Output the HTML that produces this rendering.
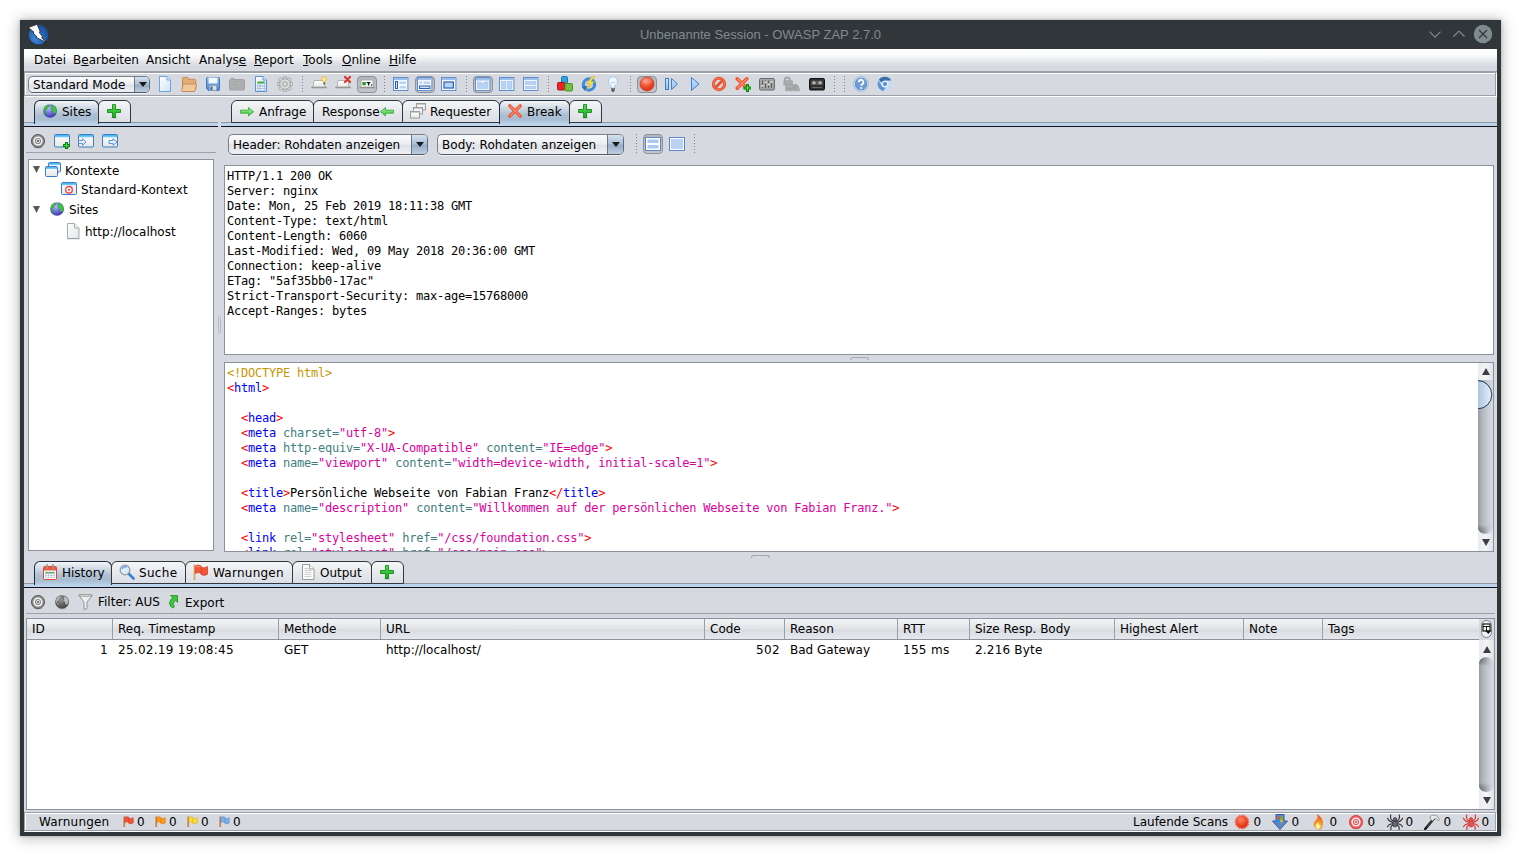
<!DOCTYPE html>
<html lang="de">
<head>
<meta charset="utf-8">
<title>Unbenannte Session - OWASP ZAP 2.7.0</title>
<style>
*{box-sizing:border-box;margin:0;padding:0}
html,body{width:1521px;height:856px;overflow:hidden;background:#fff}
body{font-family:"DejaVu Sans","Liberation Sans",sans-serif;font-size:12px;color:#000;position:relative}
#root div,#root span,#root svg,#root pre{position:absolute}
#win{left:20px;top:20px;width:1481px;height:816px;background:#31363b;box-shadow:0 1px 13px 1px rgba(0,0,0,.28),0 0 3px rgba(0,0,0,.22)}
#title{left:20px;top:20px;width:1481px;height:29px;color:#7f8c8d;font-family:"Liberation Sans",sans-serif;font-size:13px;line-height:29px;text-align:center}
#app{left:24px;top:49px;width:1473px;height:783px;background:#d6d9df}
#menubar{left:24px;top:49px;width:1473px;height:23px;background:linear-gradient(#ffffff 0,#fafbfb 28%,#eceef1 48%,#dcdfe4 66%,#d6d9df 78%,#d6d9df 100%);border-bottom:1px solid #9b9fa8}
.m{top:53px;line-height:15px;white-space:pre}
u{text-decoration:underline;text-underline-offset:1px}
.t{white-space:pre;line-height:15px;margin-top:1px}
pre{font-family:"DejaVu Sans Mono","Liberation Mono",monospace;font-size:12px;line-height:15px;letter-spacing:-0.224px;white-space:pre}
.etch{border:1px solid #9b9fa8}
.etchh{border:1px solid #fff}
.tab{height:23px;border:1px solid #33363d;border-radius:6px 6px 0 0;background:linear-gradient(#f5f6f8,#e6e8ec 50%,#dcdfe5)}
.tab.sel{border-bottom:none;border-color:#1d2c40;background:linear-gradient(#f3f6f9 0,#d5dee8 25%,#adbfd2 60%,#a9bed3 80%,#bad0e4 100%);height:24px}
.tline1{height:1px;background:#8f96a3}
.tline2{height:3px;background:#bdd4ea}
.tline3{height:1px;background:#10131f}
.pane{background:#fff;border:1px solid #8d919b}
.combo{border:1px solid #7b7f88;border-bottom-color:#52565f;border-right-color:#5a6f88;border-radius:5px;background:linear-gradient(#fafbfc,#eceef1 45%,#dfe2e7 55%,#eef0f3);box-shadow:0 1px 0 rgba(255,255,255,.7)}
.cbtn{border-left:1px solid #6b7686;border-radius:0 4px 4px 0;background:linear-gradient(#d6e1ee,#aec1d6 45%,#98aec7 55%,#bccde0)}
.arr{width:0;height:0;border-left:4px solid transparent;border-right:4px solid transparent;border-top:5.5px solid #1a1a1a;margin-left:-.5px}
.hline{height:1px;background:#9b9fa8}
.th{top:619px;height:20px;background:linear-gradient(#f4f5f7,#e3e5e9 45%,#d9dce1 55%,#e6e8ec);border-right:1px solid #9b9fa8}
.tht{top:622px;line-height:15px;white-space:pre}
.sbtrack{background:linear-gradient(90deg,#989ba2 0,#b4b7be 30%,#cbced4 70%,#d6d9df 100%)}
.sbbtn{background:linear-gradient(90deg,#e9ebee,#f3f4f6 50%,#e0e2e6)}
.up{width:0;height:0;border-left:4px solid transparent;border-right:4px solid transparent;border-bottom:7px solid #3b3e44}
.dn{width:0;height:0;border-left:4px solid transparent;border-right:4px solid transparent;border-top:7px solid #3b3e44}
.tbsel{border:1px solid #8d9199;border-radius:4px;background:linear-gradient(#b3b6bd,#c3c6cc)}
.sep{width:1px;border-left:1px dotted #8a8e97}
.d{color:#c89600}.r{color:#f00}.b{color:#00f}.a{color:#3f7f7f}.v{color:#dc009c}
</style>
</head>
<body>
<div id="root">
<div id="win"></div>
<div id="title">Unbenannte Session - OWASP ZAP 2.7.0</div>
<div id="app"></div>
<div id="menubar"></div>
<span class="m" style="left:34px">Datei</span><span class="m" style="left:73px">B<u>e</u>arbeiten</span><span class="m" style="left:146px">Ansicht</span><span class="m" style="left:199px">Analys<u>e</u></span><span class="m" style="left:254px"><u>R</u>eport</span><span class="m" style="left:303px"><u>T</u>ools</span><span class="m" style="left:342px"><u>O</u>nline</span><span class="m" style="left:389px"><u>H</u>ilfe</span>

<!-- main toolbar -->
<div class="etchh" style="left:25px;top:73px;width:1472px;height:24px"></div>
<div class="etch" style="left:24px;top:72px;width:1472px;height:24px"></div>
<div class="combo" style="left:28px;top:76px;width:122px;height:17px"></div>
<div class="cbtn" style="left:134px;top:77px;width:15px;height:15px"></div>
<div class="arr" style="left:139.5px;top:82px"></div>
<span class="t" style="left:33px;top:77px;letter-spacing:.1px">Standard Mode</span>

<!-- left tabs -->
<div class="tline1" style="left:24px;top:122px;width:194px"></div>
<div class="tline2" style="left:24px;top:123px;width:194px"></div>
<div class="tline3" style="left:24px;top:126px;width:194px"></div>
<div class="tab sel" style="left:34px;top:100px;width:65px"></div>
<div class="tab" style="left:98px;top:100px;width:33px"></div>
<span class="t" style="left:62px;top:104px">Sites</span>

<!-- right tabs -->
<div class="tline1" style="left:221px;top:122px;width:1276px"></div>
<div class="tline2" style="left:221px;top:123px;width:1276px"></div>
<div class="tline3" style="left:221px;top:126px;width:1276px"></div>
<div class="tab" style="left:231px;top:100px;width:83px"></div>
<div class="tab" style="left:313px;top:100px;width:90px"></div>
<div class="tab" style="left:402px;top:100px;width:98px"></div>
<div class="tab sel" style="left:499px;top:100px;width:71px"></div>
<div class="tab" style="left:569px;top:100px;width:33px"></div>
<span class="t" style="left:259px;top:104px">Anfrage</span>
<span class="t" style="left:322px;top:104px">Response</span>
<span class="t" style="left:430px;top:104px">Requester</span>
<span class="t" style="left:527px;top:104px">Break</span>

<!-- left pane -->
<div class="hline" style="left:26px;top:152px;width:190px"></div>
<div class="pane" style="left:28px;top:159px;width:186px;height:392px"></div>
<span class="t" style="left:65px;top:163px;letter-spacing:.15px">Kontexte</span>
<span class="t" style="left:81px;top:182px;letter-spacing:.12px">Standard-Kontext</span>
<span class="t" style="left:69px;top:202px">Sites</span>
<span class="t" style="left:85px;top:224px">http://localhost</span>

<!-- right pane -->
<div class="combo" style="left:228px;top:134px;width:200px;height:21px"></div>
<div class="cbtn" style="left:411px;top:135px;width:16px;height:19px"></div>
<div class="arr" style="left:416px;top:142px"></div>
<span class="t" style="left:233px;top:137px">Header: Rohdaten anzeigen</span>
<div class="combo" style="left:437px;top:134px;width:187px;height:21px"></div>
<div class="cbtn" style="left:607px;top:135px;width:16px;height:19px"></div>
<div class="arr" style="left:612px;top:142px"></div>
<span class="t" style="left:442px;top:137px;letter-spacing:.05px">Body: Rohdaten anzeigen</span>

<div class="pane" style="left:224px;top:165px;width:1270px;height:190px"></div>
<pre style="left:227px;top:169px">HTTP/1.1 200 OK
Server: nginx
Date: Mon, 25 Feb 2019 18:11:38 GMT
Content-Type: text/html
Content-Length: 6060
Last-Modified: Wed, 09 May 2018 20:36:00 GMT
Connection: keep-alive
ETag: "5af35bb0-17ac"
Strict-Transport-Security: max-age=15768000
Accept-Ranges: bytes</pre>
<div class="pane" style="left:224px;top:362px;width:1270px;height:190px;overflow:hidden" id="body">
<pre style="left:2px;top:3px"><span class="d" style="position:static">&lt;!DOCTYPE html&gt;</span>
<i style="font-style:normal" class="r">&lt;</i><i style="font-style:normal" class="b">html</i><i style="font-style:normal" class="r">&gt;</i>

  <i style="font-style:normal" class="r">&lt;</i><i style="font-style:normal" class="b">head</i><i style="font-style:normal" class="r">&gt;</i>
  <i style="font-style:normal" class="r">&lt;</i><i style="font-style:normal" class="b">meta</i> <i style="font-style:normal" class="a">charset</i><i style="font-style:normal" class="a">=</i><i style="font-style:normal" class="v">"utf-8"</i><i style="font-style:normal" class="r">&gt;</i>
  <i style="font-style:normal" class="r">&lt;</i><i style="font-style:normal" class="b">meta</i> <i style="font-style:normal" class="a">http-equiv</i><i style="font-style:normal" class="a">=</i><i style="font-style:normal" class="v">"X-UA-Compatible"</i> <i style="font-style:normal" class="a">content</i><i style="font-style:normal" class="a">=</i><i style="font-style:normal" class="v">"IE=edge"</i><i style="font-style:normal" class="r">&gt;</i>
  <i style="font-style:normal" class="r">&lt;</i><i style="font-style:normal" class="b">meta</i> <i style="font-style:normal" class="a">name</i><i style="font-style:normal" class="a">=</i><i style="font-style:normal" class="v">"viewport"</i> <i style="font-style:normal" class="a">content</i><i style="font-style:normal" class="a">=</i><i style="font-style:normal" class="v">"width=device-width, initial-scale=1"</i><i style="font-style:normal" class="r">&gt;</i>

  <i style="font-style:normal" class="r">&lt;</i><i style="font-style:normal" class="b">title</i><i style="font-style:normal" class="r">&gt;</i>Persönliche Webseite von Fabian Franz<i style="font-style:normal" class="r">&lt;/</i><i style="font-style:normal" class="b">title</i><i style="font-style:normal" class="r">&gt;</i>
  <i style="font-style:normal" class="r">&lt;</i><i style="font-style:normal" class="b">meta</i> <i style="font-style:normal" class="a">name</i><i style="font-style:normal" class="a">=</i><i style="font-style:normal" class="v">"description"</i> <i style="font-style:normal" class="a">content</i><i style="font-style:normal" class="a">=</i><i style="font-style:normal" class="v">"Willkommen auf der persönlichen Webseite von Fabian Franz."</i><i style="font-style:normal" class="r">&gt;</i>

  <i style="font-style:normal" class="r">&lt;</i><i style="font-style:normal" class="b">link</i> <i style="font-style:normal" class="a">rel</i><i style="font-style:normal" class="a">=</i><i style="font-style:normal" class="v">"stylesheet"</i> <i style="font-style:normal" class="a">href</i><i style="font-style:normal" class="a">=</i><i style="font-style:normal" class="v">"/css/foundation.css"</i><i style="font-style:normal" class="r">&gt;</i>
  <i style="font-style:normal" class="r">&lt;</i><i style="font-style:normal" class="b">link</i> <i style="font-style:normal" class="a">rel</i><i style="font-style:normal" class="a">=</i><i style="font-style:normal" class="v">"stylesheet"</i> <i style="font-style:normal" class="a">href</i><i style="font-style:normal" class="a">=</i><i style="font-style:normal" class="v">"/css/main.css"</i><i style="font-style:normal" class="r">&gt;</i></pre>
<div class="sbbtn" style="left:1253px;top:0;width:15px;height:188px"></div>
<div class="sbtrack" style="left:1253px;top:17px;width:15px;height:154px;border-radius:0 0 9px 9px/0 0 7px 7px"></div>
<div style="left:1253px;top:162px;width:15px;height:9px;border-radius:0 0 9px 9px/0 0 7px 7px;-webkit-mask-image:linear-gradient(to top,#000 20%,transparent);mask-image:linear-gradient(to top,#000 20%,transparent);background:linear-gradient(115deg,rgba(45,47,53,.75) 0,rgba(60,62,68,.45) 35%,rgba(120,122,128,0) 75%)"></div>
<div class="up" style="left:1257px;top:5px"></div>
<div class="dn" style="left:1257px;top:176px"></div>
</div>

<div style="left:850px;top:357px;width:19px;height:3px;border:1px solid #a4a8b1;border-bottom:none;border-radius:3px 3px 0 0"></div>
<div style="left:751px;top:555px;width:19px;height:3px;border:1px solid #a4a8b1;border-bottom:none;border-radius:3px 3px 0 0"></div>
<div style="left:218px;top:316px;width:3px;height:18px;border:1px solid #b9bcc4;border-radius:1.5px"></div>
<!-- bottom tabs -->
<div class="tline1" style="left:24px;top:583px;width:1473px"></div>
<div class="tline2" style="left:24px;top:584px;width:1473px"></div>
<div class="tline3" style="left:24px;top:587px;width:1473px"></div>
<div class="tab sel" style="left:34px;top:561px;width:78px"></div>
<div class="tab" style="left:111px;top:561px;width:75px"></div>
<div class="tab" style="left:185px;top:561px;width:108px"></div>
<div class="tab" style="left:292px;top:561px;width:80px"></div>
<div class="tab" style="left:371px;top:561px;width:33px"></div>
<span class="t" style="left:62px;top:565px">History</span>
<span class="t" style="left:139px;top:565px;letter-spacing:.3px">Suche</span>
<span class="t" style="left:213px;top:565px;letter-spacing:.25px">Warnungen</span>
<span class="t" style="left:320px;top:565px">Output</span>

<span class="t" style="left:98px;top:594px">Filter: AUS</span>
<span class="t" style="left:185px;top:595px">Export</span>
<div class="hline" style="left:26px;top:613px;width:1469px"></div>

<!-- table -->
<div class="pane" style="left:26px;top:618px;width:1469px;height:192px"></div>
<div class="th" style="left:27px;width:86px"></div>
<div class="th" style="left:113px;width:166px"></div>
<div class="th" style="left:279px;width:102px"></div>
<div class="th" style="left:381px;width:324px"></div>
<div class="th" style="left:705px;width:80px"></div>
<div class="th" style="left:785px;width:113px"></div>
<div class="th" style="left:898px;width:72px"></div>
<div class="th" style="left:970px;width:145px"></div>
<div class="th" style="left:1115px;width:129px"></div>
<div class="th" style="left:1244px;width:79px"></div>
<div class="th" style="left:1323px;width:156px;border-right:none"></div>
<div class="hline" style="left:27px;top:639px;width:1452px;background:#8d919b"></div>
<span class="tht" style="left:32px">ID</span>
<span class="tht" style="left:118px">Req. Timestamp</span>
<span class="tht" style="left:284px">Methode</span>
<span class="tht" style="left:386px">URL</span>
<span class="tht" style="left:710px">Code</span>
<span class="tht" style="left:790px">Reason</span>
<span class="tht" style="left:903px">RTT</span>
<span class="tht" style="left:975px">Size Resp. Body</span>
<span class="tht" style="left:1120px">Highest Alert</span>
<span class="tht" style="left:1249px">Note</span>
<span class="tht" style="left:1328px">Tags</span>
<span class="t" style="left:100px;top:642px">1</span>
<span class="t" style="left:118px;top:642px;letter-spacing:.28px">25.02.19 19:08:45</span>
<span class="t" style="left:284px;top:642px">GET</span>
<span class="t" style="left:386px;top:642px">http://localhost/</span>
<span class="t" style="left:756px;top:642px;letter-spacing:.35px">502</span>
<span class="t" style="left:790px;top:642px">Bad Gateway</span>
<span class="t" style="left:903px;top:642px;letter-spacing:.3px">155 ms</span>
<span class="t" style="left:975px;top:642px;letter-spacing:.2px">2.216 Byte</span>
<div style="left:1479px;top:619px;width:15px;height:21px;background:#d6d9df"></div>
<div class="sbbtn" style="left:1479px;top:640px;width:15px;height:169px"></div>
<div class="sbtrack" style="left:1479px;top:657px;width:15px;height:135px;border-radius:9px/7px"></div>
<div style="left:1479px;top:657px;width:15px;height:9px;border-radius:9px 9px 0 0/7px 7px 0 0;-webkit-mask-image:linear-gradient(to bottom,#000 20%,transparent);mask-image:linear-gradient(to bottom,#000 20%,transparent);background:linear-gradient(65deg,rgba(45,47,53,.75) 0,rgba(60,62,68,.45) 35%,rgba(120,122,128,0) 75%)"></div>
<div style="left:1479px;top:783px;width:15px;height:9px;border-radius:0 0 9px 9px/0 0 7px 7px;-webkit-mask-image:linear-gradient(to top,#000 20%,transparent);mask-image:linear-gradient(to top,#000 20%,transparent);background:linear-gradient(115deg,rgba(45,47,53,.75) 0,rgba(60,62,68,.45) 35%,rgba(120,122,128,0) 75%)"></div>
<div class="up" style="left:1482.5px;top:645.5px"></div>
<div class="dn" style="left:1482.5px;top:797px"></div>

<!-- status bar -->
<div class="etchh" style="left:25px;top:813px;width:1472px;height:19px"></div>
<div class="etch" style="left:24px;top:812px;width:1472px;height:19px"></div>
<span class="t" style="left:39px;top:814px;letter-spacing:.2px">Warnungen</span>
<span class="t" style="left:137px;top:814px">0</span>
<span class="t" style="left:169px;top:814px">0</span>
<span class="t" style="left:201px;top:814px">0</span>
<span class="t" style="left:233px;top:814px">0</span>
<span class="t" style="left:1133px;top:814px">Laufende Scans</span>
<span class="t" style="left:1253.5px;top:814px">0</span>
<span class="t" style="left:1291.5px;top:814px">0</span>
<span class="t" style="left:1329.5px;top:814px">0</span>
<span class="t" style="left:1367.5px;top:814px">0</span>
<span class="t" style="left:1405.5px;top:814px">0</span>
<span class="t" style="left:1443.5px;top:814px">0</span>
<span class="t" style="left:1481.5px;top:814px">0</span>
<svg width="0" height="0" style="left:0;top:0"><defs>
<linearGradient id="gDoc" x1="0" y1="0" x2="1" y2="1"><stop offset="0" stop-color="#fff"/><stop offset="1" stop-color="#cfe2f8"/></linearGradient>
<linearGradient id="gGDoc" x1="0" y1="0" x2="1" y2="1"><stop offset="0" stop-color="#fff"/><stop offset="1" stop-color="#dfe6e6"/></linearGradient>
<linearGradient id="gFold" x1="0" y1="0" x2="0" y2="1"><stop offset="0" stop-color="#f3cfa5"/><stop offset="1" stop-color="#e2a56b"/></linearGradient>
<linearGradient id="gBlue" x1="0" y1="0" x2="0" y2="1"><stop offset="0" stop-color="#8cbcf2"/><stop offset="1" stop-color="#4a88d6"/></linearGradient>
<linearGradient id="gWin" x1="0" y1="0" x2="0" y2="1"><stop offset="0" stop-color="#fff"/><stop offset="1" stop-color="#e6e6e6"/></linearGradient>
<linearGradient id="gTitle" x1="0" y1="0" x2="0" y2="1"><stop offset="0" stop-color="#3fb4ee"/><stop offset="1" stop-color="#7fd0f6"/></linearGradient>
<radialGradient id="gRed" cx=".4" cy=".3" r=".8"><stop offset="0" stop-color="#ff8a6a"/><stop offset=".6" stop-color="#ee4422"/><stop offset="1" stop-color="#c62b10"/></radialGradient>
<radialGradient id="gGlobe" cx=".4" cy=".3" r=".8"><stop offset="0" stop-color="#b9b7ff"/><stop offset=".55" stop-color="#6a62e0"/><stop offset="1" stop-color="#2c2a8c"/></radialGradient>
<radialGradient id="gGGlobe" cx=".4" cy=".3" r=".8"><stop offset="0" stop-color="#9a9a9a"/><stop offset=".6" stop-color="#5c5c5c"/><stop offset="1" stop-color="#3a3a3a"/></radialGradient>
<linearGradient id="gGreen" x1="0" y1="0" x2="0" y2="1"><stop offset="0" stop-color="#5fe05a"/><stop offset="1" stop-color="#13a818"/></linearGradient>
<linearGradient id="gGrey" x1="0" y1="0" x2="0" y2="1"><stop offset="0" stop-color="#c9c9c9"/><stop offset="1" stop-color="#8f8f8f"/></linearGradient>
<linearGradient id="gLB" x1="0" y1="0" x2="0" y2="1"><stop offset="0" stop-color="#cfe4fb"/><stop offset="1" stop-color="#8fbdf0"/></linearGradient>
<linearGradient id="gFlame" x1="0" y1="0" x2="0" y2="1"><stop offset="0" stop-color="#f0501c"/><stop offset=".6" stop-color="#fb9a1e"/><stop offset="1" stop-color="#ffe15a"/></linearGradient>
<linearGradient id="gThumb" x1="0" y1="0" x2="1" y2="0"><stop offset="0" stop-color="#a9c3dd"/><stop offset=".6" stop-color="#cfe0f0"/><stop offset="1" stop-color="#e8f2fa"/></linearGradient>
<radialGradient id="gZap" cx=".35" cy=".7" r=".8"><stop offset="0" stop-color="#3f86dc"/><stop offset="1" stop-color="#124a96"/></radialGradient>
<linearGradient id="gArr" x1="0" y1="0" x2="0" y2="1"><stop offset="0" stop-color="#a8eda2"/><stop offset="1" stop-color="#3ecb3a"/></linearGradient>
</defs></svg>
<svg style="left:157px;top:76px" width="16" height="16" viewBox="0 0 16 16" ><path d="M2.500 .5h7.500l3.500 3.500v11.500h-11z" fill="url(#gDoc)" stroke="#6ea3dc"/><path d="M10 .5v3.500h3.500" fill="#eef5fd" stroke="#6ea3dc"/></svg>
<svg style="left:181px;top:76px" width="16" height="16" viewBox="0 0 16 16" ><path d="M1.500 13.500v-11q0-1.200 1.200-1.200h3.300q.8 0 1.200.8l.6 1.200h5.700q1.200 0 1.200 1.200v9z" fill="#e4ad7a" stroke="#c98a52"/><path d="M.6 14.600l1.500-5.800q.2-.8 1-.8h11.700q.9 0 .7.800l-1.500 5.800q-.2.900-1 .9h-11.600q-1 0-.8-.9z" fill="#f1c89b" stroke="#c98a52"/></svg>
<svg style="left:205px;top:76px" width="16" height="16" viewBox="0 0 16 16" ><path d="M1.500 2.500q0-1 1-1h11q1 0 1 1v11q0 1-1 1h-10l-2-2z" fill="url(#gBlue)" stroke="#3d76c6"/><rect x="3.500" y="1.500" width="9" height="6" fill="#f4f8fd" stroke="#9fc2ea" stroke-width=".6"/><rect x="4.500" y="9.500" width="7" height="5" fill="#dcdcdc" stroke="#9a9a9a" stroke-width=".6"/><rect x="5.500" y="10.500" width="2" height="3.500" fill="#2f66b4"/></svg>
<svg style="left:229px;top:76px" width="16" height="16" viewBox="0 0 16 16" ><g opacity=".55"><rect x=".5" y="3.500" width="15" height="10.500" rx="1" fill="#8c8c8c" stroke="#757575"/><rect x="2" y="1.800" width="3" height="2" fill="#808080"/><circle cx="9.500" cy="8.800" r="3.300" fill="#9a9a9a" stroke="#7a7a7a"/><circle cx="9.500" cy="8.800" r="1.300" fill="#858585"/></g></svg>
<svg style="left:253px;top:76px" width="16" height="16" viewBox="0 0 16 16" ><path d="M2.500 .5h7.500l3.500 3.500v11.500h-11z" fill="url(#gDoc)" stroke="#5b93d6"/><path d="M10 .5v3.500h3.500" fill="#eef5fd" stroke="#5b93d6"/><rect x="4.300" y="5.500" width="7.500" height="2" fill="#3fae3a"/><g fill="#fff" stroke="#8fb2dc" stroke-width=".6"><rect x="4.300" y="8" width="7.500" height="1.800"/><rect x="4.300" y="10.300" width="7.500" height="1.800"/><rect x="4.300" y="12.600" width="7.500" height="1.600"/></g><path d="M7 8v6.200" stroke="#8fb2dc" stroke-width=".6"/></svg>
<svg style="left:277px;top:76px" width="16" height="16" viewBox="0 0 16 16" ><g transform="translate(8 8)"><g fill="#d6d6d6" stroke="#979797" stroke-width=".7"><rect x="-1.700" y="-7.800" width="3.400" height="4" rx=".8" transform="rotate(0)"/><rect x="-1.700" y="-7.800" width="3.400" height="4" rx=".8" transform="rotate(45)"/><rect x="-1.700" y="-7.800" width="3.400" height="4" rx=".8" transform="rotate(90)"/><rect x="-1.700" y="-7.800" width="3.400" height="4" rx=".8" transform="rotate(135)"/><rect x="-1.700" y="-7.800" width="3.400" height="4" rx=".8" transform="rotate(180)"/><rect x="-1.700" y="-7.800" width="3.400" height="4" rx=".8" transform="rotate(225)"/><rect x="-1.700" y="-7.800" width="3.400" height="4" rx=".8" transform="rotate(270)"/><rect x="-1.700" y="-7.800" width="3.400" height="4" rx=".8" transform="rotate(315)"/></g><circle r="5.300" fill="#dcdcdc" stroke="#979797" stroke-width=".8"/><circle r="2.400" fill="#d6d9df" stroke="#979797" stroke-width=".8"/></g></svg>
<svg style="left:302px;top:76px" width="1" height="18" viewBox="0 0 1 18"><rect x="0" y="0" width="1" height="1" fill="#7f838c"/><rect x="0" y="3" width="1" height="1" fill="#7f838c"/><rect x="0" y="6" width="1" height="1" fill="#7f838c"/><rect x="0" y="9" width="1" height="1" fill="#7f838c"/><rect x="0" y="12" width="1" height="1" fill="#7f838c"/><rect x="0" y="15" width="1" height="1" fill="#7f838c"/></svg>
<svg style="left:384px;top:76px" width="1" height="18" viewBox="0 0 1 18"><rect x="0" y="0" width="1" height="1" fill="#7f838c"/><rect x="0" y="3" width="1" height="1" fill="#7f838c"/><rect x="0" y="6" width="1" height="1" fill="#7f838c"/><rect x="0" y="9" width="1" height="1" fill="#7f838c"/><rect x="0" y="12" width="1" height="1" fill="#7f838c"/><rect x="0" y="15" width="1" height="1" fill="#7f838c"/></svg>
<svg style="left:466px;top:76px" width="1" height="18" viewBox="0 0 1 18"><rect x="0" y="0" width="1" height="1" fill="#7f838c"/><rect x="0" y="3" width="1" height="1" fill="#7f838c"/><rect x="0" y="6" width="1" height="1" fill="#7f838c"/><rect x="0" y="9" width="1" height="1" fill="#7f838c"/><rect x="0" y="12" width="1" height="1" fill="#7f838c"/><rect x="0" y="15" width="1" height="1" fill="#7f838c"/></svg>
<svg style="left:548px;top:76px" width="1" height="18" viewBox="0 0 1 18"><rect x="0" y="0" width="1" height="1" fill="#7f838c"/><rect x="0" y="3" width="1" height="1" fill="#7f838c"/><rect x="0" y="6" width="1" height="1" fill="#7f838c"/><rect x="0" y="9" width="1" height="1" fill="#7f838c"/><rect x="0" y="12" width="1" height="1" fill="#7f838c"/><rect x="0" y="15" width="1" height="1" fill="#7f838c"/></svg>
<svg style="left:630px;top:76px" width="1" height="18" viewBox="0 0 1 18"><rect x="0" y="0" width="1" height="1" fill="#7f838c"/><rect x="0" y="3" width="1" height="1" fill="#7f838c"/><rect x="0" y="6" width="1" height="1" fill="#7f838c"/><rect x="0" y="9" width="1" height="1" fill="#7f838c"/><rect x="0" y="12" width="1" height="1" fill="#7f838c"/><rect x="0" y="15" width="1" height="1" fill="#7f838c"/></svg>
<svg style="left:834px;top:76px" width="1" height="18" viewBox="0 0 1 18"><rect x="0" y="0" width="1" height="1" fill="#7f838c"/><rect x="0" y="3" width="1" height="1" fill="#7f838c"/><rect x="0" y="6" width="1" height="1" fill="#7f838c"/><rect x="0" y="9" width="1" height="1" fill="#7f838c"/><rect x="0" y="12" width="1" height="1" fill="#7f838c"/><rect x="0" y="15" width="1" height="1" fill="#7f838c"/></svg>
<svg style="left:844px;top:76px" width="1" height="18" viewBox="0 0 1 18"><rect x="0" y="0" width="1" height="1" fill="#7f838c"/><rect x="0" y="3" width="1" height="1" fill="#7f838c"/><rect x="0" y="6" width="1" height="1" fill="#7f838c"/><rect x="0" y="9" width="1" height="1" fill="#7f838c"/><rect x="0" y="12" width="1" height="1" fill="#7f838c"/><rect x="0" y="15" width="1" height="1" fill="#7f838c"/></svg>
<svg style="left:311px;top:76px" width="16" height="16" viewBox="0 0 16 16" ><path d="M.3 11.600h15.400" stroke="#8f8f8f" stroke-width="1.300"/><path d="M.8 11q1.700 0 1.700-1.700v-3.300q0-1.500 1.500-1.500h8q1.500 0 1.500 1.500v3.300q0 1.700 1.700 1.700z" fill="url(#gWin)" stroke="#a3a3a3" stroke-width=".8"/><path d="M13.200 0.300a2.600 2.600 0 0 1 1.300 4.800l-.3 1.500h-2l-.3-1.500a2.600 2.600 0 0 1 1.300-4.800z" fill="#ffe48a" stroke="#d9a93a" stroke-width=".7"/><rect x="12.300" y="6.600" width="1.800" height="1.700" fill="#555"/></svg>
<svg style="left:335px;top:76px" width="16" height="16" viewBox="0 0 16 16" ><path d="M.3 11.600h15.400" stroke="#8f8f8f" stroke-width="1.300"/><path d="M.8 11q1.700 0 1.700-1.700v-3.300q0-1.500 1.500-1.500h8q1.500 0 1.500 1.500v3.300q0 1.700 1.700 1.700z" fill="url(#gWin)" stroke="#a3a3a3" stroke-width=".8"/><path d="M10 1l5 5M15 1l-5 5" stroke="#e0332c" stroke-width="2.200" stroke-linecap="round"/></svg>
<div class="tbsel" style="left:357px;top:76px;width:20px;height:17px"></div>
<svg style="left:359px;top:76px" width="16" height="16" viewBox="0 0 16 16" ><path d="M.3 11.600h15.400" stroke="#8a8a8a" stroke-width="1.300"/><path d="M.8 11q1.200 0 1.200-1.500v-4q0-1.500 1.500-1.500h9q1.500 0 1.500 1.500v4q0 1.500 1.200 1.500z" fill="#fdfdfd" stroke="#a0a0a0" stroke-width=".8"/><rect x="3.800" y="6.300" width="2.600" height="2.600" fill="#20b020" stroke="#0d7a0d" stroke-width=".6"/><path d="M7.800 6.600h3.600M9.600 6.600v3" stroke="#111" stroke-width="1.300"/><rect x="12" y="8.400" width="1.200" height="1.200" fill="#111"/></svg>
<svg style="left:393px;top:76px" width="16" height="16" viewBox="0 0 16 16" ><rect x=".5" y="1.500" width="14.400" height="13" fill="#f4f8fe" stroke="#648fce"/><rect x="1" y="2" width="13.400" height="2" fill="#9dbdea"/><rect x="2.500" y="5.500" width="2" height="7" fill="#cfe0f6" stroke="#2f62b0"/><rect x="6.500" y="5.500" width="6.400" height="2.500" fill="#b9d3f3"/><rect x="6.500" y="10" width="6.400" height="2.500" fill="#b9d3f3"/></svg>
<div class="tbsel" style="left:415px;top:76px;width:20px;height:17px"></div>
<svg style="left:417px;top:76px" width="16" height="16" viewBox="0 0 16 16" ><rect x=".5" y="1.500" width="14.400" height="13" fill="#f4f8fe" stroke="#648fce"/><rect x="1" y="2" width="13.400" height="2" fill="#9dbdea"/><rect x="2.500" y="5.500" width="2.500" height="2.500" fill="#b9d3f3"/><rect x="6.500" y="5.500" width="6.400" height="2.500" fill="#b9d3f3"/><rect x="2.500" y="10" width="10.400" height="2.500" fill="#cfe0f6" stroke="#2f62b0"/></svg>
<svg style="left:441px;top:76px" width="16" height="16" viewBox="0 0 16 16" ><rect x=".5" y="1.500" width="14.400" height="13" fill="#f4f8fe" stroke="#648fce"/><rect x="1" y="2" width="13.400" height="2" fill="#9dbdea"/><rect x="3" y="6" width="9.400" height="6" fill="#b9d3f3" stroke="#2f62b0" stroke-width="1.200"/></svg>
<div class="tbsel" style="left:473px;top:76px;width:20px;height:17px"></div>
<svg style="left:475px;top:76px" width="16" height="16" viewBox="0 0 16 16" ><rect x=".5" y="1.500" width="14.400" height="13" fill="#f4f8fe" stroke="#648fce"/><rect x="1" y="2" width="13.400" height="2.500" fill="#9dbdea"/><path d="M2.500 6h3.500v1h3.400v-1h3.500v6.500h-10.400z" fill="#b9d3f3" stroke="#9cc0ee" stroke-width=".6"/></svg>
<svg style="left:499px;top:76px" width="16" height="16" viewBox="0 0 16 16" ><rect x=".5" y="1.500" width="14.400" height="13" fill="#f4f8fe" stroke="#648fce"/><rect x="1" y="2" width="13.400" height="2" fill="#9dbdea"/><rect x="2.500" y="5.500" width="4.300" height="7.500" fill="#b9d3f3" stroke="#9cc0ee" stroke-width=".6"/><rect x="8.600" y="5.500" width="4.300" height="7.500" fill="#b9d3f3" stroke="#9cc0ee" stroke-width=".6"/></svg>
<svg style="left:523px;top:76px" width="16" height="16" viewBox="0 0 16 16" ><rect x=".5" y="1.500" width="14.400" height="13" fill="#f4f8fe" stroke="#648fce"/><rect x="1" y="2" width="13.400" height="2" fill="#9dbdea"/><rect x="2.500" y="5.500" width="10.400" height="3" fill="#b9d3f3" stroke="#9cc0ee" stroke-width=".6"/><rect x="2.500" y="10.300" width="10.400" height="2.500" fill="#b9d3f3" stroke="#9cc0ee" stroke-width=".6"/></svg>
<svg style="left:557px;top:76px" width="16" height="16" viewBox="0 0 16 16" ><rect x="4.500" y=".5" width="6" height="7" rx="1.200" fill="#2da4dc" stroke="#1779b0"/><rect x=".5" y="6.500" width="7.500" height="7.500" rx="1.200" fill="#e8242a" stroke="#b01218"/><rect x="8" y="7.500" width="7.500" height="7.500" rx="1.200" fill="#76c043" stroke="#4c9422"/></svg>
<svg style="left:581px;top:76px" width="16" height="16" viewBox="0 0 16 16" ><circle cx="8" cy="8.500" r="5.600" fill="none" stroke="#3b8ee0" stroke-width="3.200"/><path d="M0.500 10.500l3.500 4.500 2.500-5.200z" fill="#2d6fc4"/><path d="M11.500 0l-6 7.500h3l-3 7 8-9h-3.500l4-5.500z" fill="#f6e04a" stroke="#c9a820" stroke-width=".6"/></svg>
<svg style="left:605px;top:76px" width="16" height="16" viewBox="0 0 16 16" ><path d="M8 .6a4.700 4.700 0 0 1 2.600 8.600q-.6.500-.6 1.300v1.500h-4v-1.500q0-.8-.6-1.300a4.700 4.700 0 0 1 2.600-8.600z" fill="#eef6ff" stroke="#9cc4f0" stroke-width=".9"/><path d="M5.500 6q2.500 2 5 0" fill="none" stroke="#9cc4f0" stroke-width=".8"/><rect x="6" y="12" width="4" height="2.200" fill="#777"/><rect x="6.700" y="14.200" width="2.600" height="1.300" fill="#222"/></svg>
<div class="tbsel" style="left:637px;top:76px;width:20px;height:17px"></div>
<svg style="left:639px;top:76px" width="16" height="16" viewBox="0 0 16 16" ><circle cx="8" cy="8" r="7" fill="url(#gRed)" stroke="#c2371c" stroke-width=".6"/><ellipse cx="8" cy="5" rx="5" ry="3" fill="#fff" opacity=".18"/></svg>
<svg style="left:664px;top:76px" width="16" height="16" viewBox="0 0 16 16" ><rect x="1.500" y="2.500" width="3" height="11" fill="url(#gLB)" stroke="#3c7fd0"/><path d="M7.500 2.500l6 5.500-6 5.500z" fill="url(#gLB)" stroke="#3c7fd0"/></svg>
<svg style="left:687px;top:76px" width="16" height="16" viewBox="0 0 16 16" ><path d="M4.500 1.500l7.500 6.500-7.500 6.500z" fill="url(#gLB)" stroke="#3c7fd0"/></svg>
<svg style="left:711px;top:76px" width="16" height="16" viewBox="0 0 16 16" ><circle cx="8" cy="8" r="5.700" fill="none" stroke="#e8502c" stroke-width="3"/><path d="M4 12l8-8" stroke="#e8502c" stroke-width="2.600"/><circle cx="8" cy="8" r="5.700" fill="none" stroke="#ff9a78" stroke-width=".9" opacity=".7"/></svg>
<svg style="left:735px;top:76px" width="16" height="16" viewBox="0 0 16 16" ><path d="M2.200 2.700l9.600 9.600M11.800 2.700l-9.600 9.600" stroke="#ee4f2b" stroke-width="3.400" stroke-linecap="round"/><path d="M2.500 3l9 9M11.500 3l-9 9" stroke="#ff8f6e" stroke-width="1.200" stroke-linecap="round"/><polygon points="11.5,8.500 13.500,8.500 13.500,11 16,11 16,13 13.500,13 13.500,15.500 11.500,15.500 11.500,13 9,13 9,11 11.500,11" fill="#43dd40" stroke="#0f7f14" stroke-width="1.100" stroke-linejoin="round"/></svg>
<svg style="left:759px;top:76px" width="16" height="16" viewBox="0 0 16 16" ><rect x=".5" y="2.500" width="15" height="11.500" rx="1.200" fill="#a4a4a4" stroke="#6c6c6c"/><g stroke="#555" stroke-width=".9"><path d="M3.500 4.500v7.500M6.500 4.500v7.500M9.500 4.500v7.500M12.500 4.500v7.500"/></g><g fill="#f2f2f2"><rect x="2.700" y="9" width="1.700" height="1.700"/><rect x="5.700" y="5.500" width="1.700" height="1.700"/><rect x="8.700" y="7.500" width="1.700" height="1.700"/><rect x="11.700" y="5" width="1.700" height="1.700"/></g></svg>
<svg style="left:783px;top:76px" width="18" height="16" viewBox="0 0 18 16" ><g opacity=".62"><circle cx="4.300" cy="3.800" r="2.400" fill="none" stroke="#808080" stroke-width="1.700"/><rect x=".8" y="4.800" width="8.700" height="4.200" fill="#8e8e8e" stroke="#7a7a7a" stroke-width=".6"/><path d="M2.500 8.500h9.500q2.500-.6 3.300 2l1.700 4.200h-14.500z" fill="#8e8e8e" stroke="#7a7a7a" stroke-width=".6"/><circle cx="13" cy="10.800" r="1.700" fill="none" stroke="#777" stroke-width=".8"/><path d="M4.500 12.500h6" stroke="#7a7a7a" stroke-width=".9"/></g></svg>
<svg style="left:808.5px;top:76px" width="16" height="16" viewBox="0 0 16 16" ><rect x=".5" y="2.500" width="15" height="11.500" rx="1.200" fill="#2e2e2e" stroke="#111"/><rect x="2" y="4.500" width="12" height="4.500" rx=".8" fill="#555"/><circle cx="5" cy="6.800" r="1.500" fill="#e8e8e8"/><circle cx="11" cy="6.800" r="1.500" fill="#e8e8e8"/><circle cx="5" cy="6.800" r=".6" fill="#222"/><circle cx="11" cy="6.800" r=".6" fill="#222"/><path d="M3 11.500h10" stroke="#666" stroke-width="1.200"/></svg>
<svg style="left:853px;top:76px" width="16" height="16" viewBox="0 0 16 16" ><circle cx="8" cy="8" r="6.900" fill="#6d9bd2" stroke="#dfeaf7" stroke-width="1"/><circle cx="8" cy="8" r="7.400" fill="none" stroke="#7da7da" stroke-width=".6"/><path d="M5.800 6.200a2.300 2.300 0 1 1 3.400 2q-1.100.6-1.100 1.600" fill="none" stroke="#fff" stroke-width="1.700"/><circle cx="8.100" cy="11.900" r="1" fill="#fff"/></svg>
<svg style="left:877px;top:76px" width="16" height="16" viewBox="0 0 16 16" ><circle cx="8" cy="8" r="7.200" fill="#c6dcf3"/><path d="M8 .8a7.200 7.200 0 0 1 6.300 3.700h-6.300a3.500 3.500 0 0 0-3.300 2.300l-2.900-3a7.200 7.200 0 0 1 6.200-3z" fill="#3a6ea8"/><path d="M1.500 4.500l3.300 5.500a3.500 3.500 0 0 0 3.800 1.400l-2.200 3.600a7.200 7.200 0 0 1-4.900-10.500z" fill="#5b95d6"/><circle cx="8" cy="8" r="3.300" fill="#e6f0fb"/><rect x="6.300" y="6.300" width="3.400" height="3.400" fill="#4a84d0"/></svg>
<svg style="left:43px;top:104px" width="14" height="14" viewBox="0 0 14 14" ><circle cx="7" cy="7" r="6.800" fill="url(#gGlobe)"/><path d="M3.200 1.600q1.600-.9 3-.4l-.3 1.600-1.600.8-.5 1.800-1.700 1 .3 2 1.300.5.300 2.200q-2.700-1.300-3.300-4.600.3-3 2.500-4.900zM8.500 1l2.300.5q1.900 1.200 2.600 3.300l-.2 3.100-1.300 2.100-1.500-.6-.6-2.300-1.700-1.400.8-2z" fill="#3fc53f" stroke="#1f8a24" stroke-width=".4"/></svg>
<svg style="left:107px;top:104px" width="14" height="15" viewBox="0 0 14 15" ><path d="M5.500 .5h3v5h5v3h-5v5h-3v-5h-5v-3h5z" fill="url(#gGreen)" stroke="#158a1a" stroke-width=".9"/><ellipse cx="7" cy="13.800" rx="4" ry=".6" fill="#000" opacity=".18"/></svg>
<svg style="left:240px;top:106.5px" width="14" height="10" viewBox="0 0 14 10" ><path d="M.5 3.200h8v-2.700l5 4.200-5 4.200v-2.700h-8z" fill="url(#gArr)" stroke="#27a52c" stroke-width=".8"/></svg>
<svg style="left:380px;top:106.5px" width="14" height="10" viewBox="0 0 14 10" ><path d="M13.500 3.200h-8v-2.700l-5 4.200 5 4.200v-2.700h8z" fill="url(#gArr)" stroke="#27a52c" stroke-width=".8"/></svg>
<svg style="left:410px;top:103px" width="16" height="16" viewBox="0 0 16 16" ><g stroke="#8a8a8a" stroke-width=".8"><rect x="6.500" y=".5" width="9" height="6.500" fill="url(#gWin)"/><rect x="3.500" y="4.500" width="9" height="6.500" fill="url(#gWin)"/><rect x=".5" y="8.500" width="9" height="6.500" fill="url(#gWin)"/></g><path d="M7 1.500h8M4 5.500h8M1 9.500h8" stroke="#c9c9c9" stroke-width="1.200"/></svg>
<svg style="left:508px;top:104px" width="14" height="14" viewBox="0 0 14 14" ><path d="M1.800 1.800l10.400 10.400M12.200 1.800l-10.400 10.400" stroke="#ee4f2b" stroke-width="3.200" stroke-linecap="round"/><path d="M2 2l10 10M12 2l-10 10" stroke="#ff8f6e" stroke-width="1.100" stroke-linecap="round"/></svg>
<svg style="left:578px;top:104px" width="14" height="15" viewBox="0 0 14 15" ><path d="M5.500 .5h3v5h5v3h-5v5h-3v-5h-5v-3h5z" fill="url(#gGreen)" stroke="#158a1a" stroke-width=".9"/><ellipse cx="7" cy="13.800" rx="4" ry=".6" fill="#000" opacity=".18"/></svg>
<svg style="left:31px;top:134px" width="14" height="15" viewBox="0 0 14 15" ><ellipse cx="7" cy="13.600" rx="5" ry=".8" fill="#000" opacity=".15"/><circle cx="7" cy="7" r="6.600" fill="#8a8a8a" stroke="#4a4a4a" stroke-width=".8"/><circle cx="7" cy="7" r="4.600" fill="#f4f4f4"/><circle cx="7" cy="7" r="3.100" fill="#8a8a8a"/><circle cx="7" cy="7" r="1.900" fill="#f4f4f4"/><circle cx="7" cy="7" r="1" fill="#4a4a4a"/></svg>
<svg style="left:54px;top:134px" width="16" height="16" viewBox="0 0 16 16" ><rect x=".5" y=".5" width="15" height="12.500" rx="1" fill="url(#gWin)" stroke="#3d7cc9"/><rect x="1" y="1" width="14" height="2.300" fill="url(#gTitle)"/><polygon points="11.50,8.50 13.50,8.50 13.50,10.50 15.50,10.50 15.50,12.50 13.50,12.50 13.50,14.50 11.50,14.50 11.50,12.50 9.50,12.50 9.50,10.50 11.50,10.50" fill="#43dd40" stroke="#0f7f14" stroke-width="1.1" stroke-linejoin="round"/></svg>
<svg style="left:78px;top:134px" width="16" height="16" viewBox="0 0 16 16" ><rect x=".5" y=".5" width="15" height="12.500" rx="1" fill="url(#gWin)" stroke="#3d7cc9"/><rect x="1" y="1" width="14" height="2.300" fill="url(#gTitle)"/><path d="M.5 6.500h4v-1.800l3.500 3.300-3.500 3.300v-1.800h-4z" fill="#e6f2fd" stroke="#3d7cc9" stroke-width=".8"/></svg>
<svg style="left:102px;top:134px" width="16" height="16" viewBox="0 0 16 16" ><rect x=".5" y=".5" width="15" height="12.500" rx="1" fill="url(#gWin)" stroke="#3d7cc9"/><rect x="1" y="1" width="14" height="2.300" fill="url(#gTitle)"/><path d="M7 6.500h4v-1.800l4 3.300-4 3.300v-1.800h-4z" fill="#e6f2fd" stroke="#3d7cc9" stroke-width=".8"/></svg>
<svg style="left:33px;top:166px" width="7" height="7" viewBox="0 0 7 7" ><path d="M0 0h7l-3.500 7z" fill="#5a5a5a"/></svg>
<svg style="left:33px;top:206px" width="7" height="7" viewBox="0 0 7 7" ><path d="M0 0h7l-3.500 7z" fill="#5a5a5a"/></svg>
<svg style="left:45px;top:162px" width="16" height="15" viewBox="0 0 16 15" ><rect x="3.500" y=".5" width="12" height="9.500" rx="1" fill="url(#gWin)" stroke="#3d7cc9"/><rect x="4" y="1" width="11" height="2" fill="url(#gTitle)"/><rect x=".5" y="4.500" width="12" height="10" rx="1" fill="url(#gWin)" stroke="#3d7cc9"/><rect x="1" y="5" width="11" height="2" fill="url(#gTitle)"/></svg>
<svg style="left:61px;top:182px" width="16" height="13" viewBox="0 0 16 13" ><rect x=".5" y=".5" width="15" height="12" rx="1" fill="url(#gWin)" stroke="#3d7cc9"/><rect x="1" y="1" width="14" height="2.200" fill="url(#gTitle)"/><circle cx="8" cy="7.800" r="3.300" fill="#fff" stroke="#ee3b3b" stroke-width="1.300"/><circle cx="8" cy="7.800" r="1.100" fill="#ee3b3b"/></svg>
<svg style="left:50px;top:202px" width="14" height="14" viewBox="0 0 14 14" ><circle cx="7" cy="7" r="6.800" fill="url(#gGlobe)"/><path d="M3.200 1.600q1.600-.9 3-.4l-.3 1.600-1.600.8-.5 1.800-1.700 1 .3 2 1.300.5.300 2.200q-2.700-1.300-3.300-4.600.3-3 2.500-4.900zM8.500 1l2.300.5q1.900 1.200 2.600 3.300l-.2 3.100-1.300 2.100-1.500-.6-.6-2.300-1.700-1.400.8-2z" fill="#3fc53f" stroke="#1f8a24" stroke-width=".4"/></svg>
<svg style="left:67px;top:223px" width="13" height="17" viewBox="0 0 13 17" ><path d="M.5 .5h7l4.500 4.500v10.500h-11.500z" fill="url(#gGDoc)" stroke="#9fb0ae"/><path d="M7.500 .5v4.500h4.500" fill="#f4f7f7" stroke="#9fb0ae"/><path d="M0 16h13" stroke="#000" opacity=".15"/></svg>
<div class="tbsel" style="left:643px;top:134px;width:20px;height:20px"></div>
<svg style="left:636px;top:134px" width="1" height="21" viewBox="0 0 1 21"><rect x="0" y="0" width="1" height="1" fill="#7f838c"/><rect x="0" y="3" width="1" height="1" fill="#7f838c"/><rect x="0" y="6" width="1" height="1" fill="#7f838c"/><rect x="0" y="9" width="1" height="1" fill="#7f838c"/><rect x="0" y="12" width="1" height="1" fill="#7f838c"/><rect x="0" y="15" width="1" height="1" fill="#7f838c"/><rect x="0" y="18" width="1" height="1" fill="#7f838c"/></svg>
<svg style="left:694px;top:134px" width="1" height="21" viewBox="0 0 1 21"><rect x="0" y="0" width="1" height="1" fill="#7f838c"/><rect x="0" y="3" width="1" height="1" fill="#7f838c"/><rect x="0" y="6" width="1" height="1" fill="#7f838c"/><rect x="0" y="9" width="1" height="1" fill="#7f838c"/><rect x="0" y="12" width="1" height="1" fill="#7f838c"/><rect x="0" y="15" width="1" height="1" fill="#7f838c"/><rect x="0" y="18" width="1" height="1" fill="#7f838c"/></svg>
<svg style="left:645px;top:137px" width="16" height="14" viewBox="0 0 16 14" ><rect x=".5" y=".5" width="15" height="13" fill="#fff" stroke="#5a86c8"/><rect x="2.500" y="2.500" width="11" height="3.500" fill="#a9c9f0"/><rect x="2.500" y="8" width="11" height="3.500" fill="#a9c9f0"/></svg>
<svg style="left:669px;top:137px" width="16" height="14" viewBox="0 0 16 14" ><rect x=".5" y=".5" width="15" height="13" fill="#fff" stroke="#5a86c8"/><rect x="2.500" y="2.500" width="11" height="9" fill="#b9d3f3" stroke="#9cc0ee" stroke-width=".6"/></svg>
<svg style="left:43px;top:564px" width="14" height="16" viewBox="0 0 14 16" ><rect x=".5" y="2.500" width="13" height="13" rx="1" fill="#fff" stroke="#e0452c"/><rect x="1" y="3" width="12" height="3.500" fill="#ee5a3c"/><path d="M4 .5v4M10 .5v4" stroke="#9a9a9a" stroke-width="1.600" stroke-linecap="round"/><rect x="2.500" y="8" width="9" height="1.500" fill="#3fae3a"/><g stroke="#9fb8d8" stroke-width=".6" fill="none"><rect x="2.500" y="8" width="9" height="5.500"/><path d="M5.500 8v5.500M8.500 8v5.500M2.500 11.500h9"/></g></svg>
<svg style="left:119px;top:564px" width="16" height="16" viewBox="0 0 16 16" ><path d="M9 9l5.500 5.500" stroke="#3d7fd6" stroke-width="2.600" stroke-linecap="round"/><circle cx="6" cy="6" r="4.800" fill="#d8ebff" stroke="#9a9a9a" stroke-width="1.300"/><path d="M3.200 5a3 3 0 0 1 4.500-1.800" fill="none" stroke="#5aa0f0" stroke-width="1.300"/></svg>
<svg style="left:193px;top:564px" width="16" height="16" viewBox="0 0 16 16" ><path d="M1.500 1.200v14.300" stroke="#d9a066" stroke-width="1.700" stroke-linecap="round"/><path d="M2.400 2q3-1.800 5.800 0v1.200q3 1.600 6.300-.6v7.600q-3.300 2.200-6.300.4v-1.200q-2.800-1.600-5.800 0z" fill="#f4553a" stroke="#d2361e" stroke-width=".7" stroke-linejoin="round"/><path d="M8.200 3.200v6.200" stroke="#d2361e" stroke-width=".7"/><path d="M3 3q2.500-1.300 4.600-.2" stroke="#fff" stroke-opacity=".45" stroke-width=".9" fill="none"/></svg>
<svg style="left:302px;top:564px" width="13" height="16" viewBox="0 0 13 16" ><path d="M.5 .5h7l4.500 4.500v10.500h-11.500z" fill="#fbfbfb" stroke="#9a9a9a"/><path d="M7.500 .5v4.500h4.500" fill="#fff" stroke="#9a9a9a"/><path d="M2.500 6.500h7M2.500 8.500h7M2.500 10.500h7M2.500 12.500h7M2.500 4.500h4" stroke="#c4c4c4" stroke-width=".8"/></svg>
<svg style="left:380px;top:565px" width="14" height="15" viewBox="0 0 14 15" ><path d="M5.500 .5h3v5h5v3h-5v5h-3v-5h-5v-3h5z" fill="url(#gGreen)" stroke="#158a1a" stroke-width=".9"/><ellipse cx="7" cy="13.800" rx="4" ry=".6" fill="#000" opacity=".18"/></svg>
<svg style="left:31px;top:595px" width="14" height="15" viewBox="0 0 14 15" ><ellipse cx="7" cy="13.600" rx="5" ry=".8" fill="#000" opacity=".15"/><circle cx="7" cy="7" r="6.600" fill="#8a8a8a" stroke="#4a4a4a" stroke-width=".8"/><circle cx="7" cy="7" r="4.600" fill="#f4f4f4"/><circle cx="7" cy="7" r="3.100" fill="#8a8a8a"/><circle cx="7" cy="7" r="1.900" fill="#f4f4f4"/><circle cx="7" cy="7" r="1" fill="#4a4a4a"/></svg>
<svg style="left:55px;top:595px" width="14" height="15" viewBox="0 0 14 15" ><ellipse cx="7" cy="13.700" rx="5" ry=".7" fill="#000" opacity=".12"/><circle cx="7" cy="7" r="6.800" fill="url(#gGGlobe)"/><path d="M3.200 1.600q1.600-.9 3-.4l-.3 1.600-1.600.8-.5 1.800-1.700 1 .3 2 1.300.5.300 2.200q-2.700-1.300-3.300-4.600.3-3 2.500-4.900zM8.500 1l2.300.5q1.900 1.200 2.600 3.300l-.2 3.100-1.300 2.100-1.500-.6-.6-2.300-1.700-1.400.8-2z" fill="#bdbdbd" stroke="#4a4a4a" stroke-width=".4"/></svg>
<svg style="left:78px;top:594px" width="15" height="16" viewBox="0 0 15 16" ><path d="M.7 1.200q6.500-1.400 13.600 0l-5.300 6.800v6.500l-3 1v-7.500z" fill="#efefef" stroke="#8a8a8a" stroke-width=".9"/><ellipse cx="7.500" cy="1.500" rx="6.500" ry="1" fill="#dadada" stroke="#8a8a8a" stroke-width=".6"/></svg>
<svg style="left:167px;top:594px" width="12" height="15" viewBox="0 0 12 15" ><path d="M5.500 14q-5-4-1.500-8.500l1.700-1.800-2.200-2.200h7v7l-2.200-2.200q-3.500 3-1 6.700z" fill="#3fc53a" stroke="#1d8f22" stroke-width=".8"/></svg>
<svg style="left:1481px;top:620px" width="11" height="18" viewBox="0 0 11 18" ><rect x=".5" y=".5" width="10" height="17" rx="5" fill="#f1f2f4" stroke="#7b7f88"/><rect x="2" y="4" width="7" height="7" fill="#fff" stroke="#111" stroke-width="1.200"/><path d="M2 6.500h7M5.500 6.500v4.500" stroke="#111" stroke-width="1"/><path d="M4 10.500h6.500l-3.200 3.500z" fill="#111"/></svg>
<svg style="left:123px;top:816px" width="11" height="11" viewBox="0 0 11 11" ><path d="M1.200 1v9.800" stroke="#b9742f" stroke-width="1.400" stroke-linecap="round"/><path d="M1.900 1.300q2-1.200 3.900 0v.9q2.100 1.100 4.400-.4v5.200q-2.300 1.500-4.400.3v-.9q-1.900-1.100-3.900 0z" fill="#f4553a" stroke="#d2361e" stroke-width=".6" stroke-linejoin="round"/><path d="M5.800 2.200v4.300" stroke="#d2361e" stroke-width=".6"/></svg>
<svg style="left:155px;top:816px" width="11" height="11" viewBox="0 0 11 11" ><path d="M1.200 1v9.800" stroke="#b9742f" stroke-width="1.400" stroke-linecap="round"/><path d="M1.900 1.300q2-1.200 3.900 0v.9q2.100 1.100 4.400-.4v5.200q-2.300 1.500-4.400.3v-.9q-1.900-1.100-3.900 0z" fill="#fb9a1e" stroke="#e07a08" stroke-width=".6" stroke-linejoin="round"/><path d="M5.800 2.200v4.300" stroke="#e07a08" stroke-width=".6"/></svg>
<svg style="left:187px;top:816px" width="11" height="11" viewBox="0 0 11 11" ><path d="M1.200 1v9.800" stroke="#b9742f" stroke-width="1.400" stroke-linecap="round"/><path d="M1.900 1.300q2-1.200 3.900 0v.9q2.100 1.100 4.400-.4v5.200q-2.300 1.500-4.400.3v-.9q-1.900-1.100-3.900 0z" fill="#fbdc3a" stroke="#d9b010" stroke-width=".6" stroke-linejoin="round"/><path d="M5.800 2.200v4.300" stroke="#d9b010" stroke-width=".6"/></svg>
<svg style="left:219px;top:816px" width="11" height="11" viewBox="0 0 11 11" ><path d="M1.200 1v9.800" stroke="#b9742f" stroke-width="1.400" stroke-linecap="round"/><path d="M1.900 1.300q2-1.200 3.900 0v.9q2.100 1.100 4.400-.4v5.200q-2.300 1.500-4.400.3v-.9q-1.900-1.100-3.900 0z" fill="#7db0e8" stroke="#4f88cc" stroke-width=".6" stroke-linejoin="round"/><path d="M5.800 2.200v4.300" stroke="#4f88cc" stroke-width=".6"/></svg>
<svg style="left:1234px;top:814px" width="16" height="16" viewBox="0 0 16 16" ><polygon points="15.60,8.00 14.18,9.23 15.02,10.91 13.24,11.50 13.37,13.37 11.50,13.24 10.91,15.02 9.23,14.18 8.00,15.60 6.77,14.18 5.09,15.02 4.50,13.24 2.63,13.37 2.76,11.50 0.98,10.91 1.82,9.23 0.40,8.00 1.82,6.77 0.98,5.09 2.76,4.50 2.63,2.63 4.50,2.76 5.09,0.98 6.77,1.82 8.00,0.40 9.23,1.82 10.91,0.98 11.50,2.76 13.37,2.63 13.24,4.50 15.02,5.09 14.18,6.77" fill="#f2583a"/><circle cx="8" cy="8" r="5.800" fill="url(#gRed)"/></svg>
<svg style="left:1272px;top:814px" width="16" height="16" viewBox="0 0 16 16" ><path d="M4 .5h8v6.500h3.500l-7.500 8.500-7.500-8.500h3.500z" fill="#5b87c8" stroke="#2f5597" stroke-width=".9"/><rect x="5.300" y="2.500" width="2.400" height="2.600" fill="#f25022"/><rect x="8.300" y="2.500" width="2.400" height="2.600" fill="#7fba00"/><rect x="5.300" y="5.600" width="2.400" height="2.600" fill="#00a4ef"/><rect x="8.300" y="5.600" width="2.400" height="2.600" fill="#ffb900"/></svg>
<svg style="left:1313px;top:814px" width="10" height="16" viewBox="0 0 10 16" ><path d="M4.500 .5q5 3 5 8 .2 3-1.500 6.500-6.500.5-7-4.500 0-2.500 3-5 1.800-2 .5-5z" fill="url(#gFlame)" stroke="#e8601a" stroke-width=".6"/><path d="M5 15q-2.500-1-2-3.500.5-2 2.500-3.500.3 2.500 1.700 4 .5 2-2.200 3z" fill="#fff3a8"/></svg>
<svg style="left:1349px;top:815px" width="14" height="15" viewBox="0 0 14 15" ><ellipse cx="7" cy="13.600" rx="5" ry=".8" fill="#000" opacity=".15"/><circle cx="7" cy="7" r="6.600" fill="#f0585a" stroke="#d23338" stroke-width=".8"/><circle cx="7" cy="7" r="4.600" fill="#f4f4f4"/><circle cx="7" cy="7" r="3.100" fill="#f0585a"/><circle cx="7" cy="7" r="1.900" fill="#f4f4f4"/><circle cx="7" cy="7" r="1" fill="#e03a3f"/></svg>
<svg style="left:1386.5px;top:814px" width="16" height="16" viewBox="0 0 16 16" ><path d="M9 7.200Q13.600 5.800 12.200 .8" fill="none" stroke="#2a2a2a" stroke-width="1.050" stroke-linecap="round"/><path d="M9.500 8.200Q14 8 15.500 4.300" fill="none" stroke="#2a2a2a" stroke-width="1.050" stroke-linecap="round"/><path d="M9.500 9.700Q14 9.500 15.500 12.800" fill="none" stroke="#2a2a2a" stroke-width="1.050" stroke-linecap="round"/><path d="M9 10.800Q13 11.500 12 15.600" fill="none" stroke="#2a2a2a" stroke-width="1.050" stroke-linecap="round"/><g transform="translate(16 0) scale(-1 1)"><path d="M9 7.200Q13.600 5.800 12.200 .8" fill="none" stroke="#2a2a2a" stroke-width="1.050" stroke-linecap="round"/><path d="M9.500 8.200Q14 8 15.500 4.300" fill="none" stroke="#2a2a2a" stroke-width="1.050" stroke-linecap="round"/><path d="M9.500 9.700Q14 9.500 15.500 12.800" fill="none" stroke="#2a2a2a" stroke-width="1.050" stroke-linecap="round"/><path d="M9 10.800Q13 11.500 12 15.600" fill="none" stroke="#2a2a2a" stroke-width="1.050" stroke-linecap="round"/></g><ellipse cx="8" cy="9.800" rx="2.300" ry="3.200" fill="#6a6a7a" stroke="#2a2a2a" stroke-width=".7"/><circle cx="8" cy="5.300" r="1.700" fill="#6a6a7a" stroke="#2a2a2a" stroke-width=".7"/></svg>
<svg style="left:1424px;top:814px" width="16" height="16" viewBox="0 0 16 16" ><path d="M1.200 15l8.300-9.800" stroke="#1c1c1c" stroke-width="2.600" stroke-linecap="round"/><path d="M3 13.200l5-6" stroke="#777" stroke-width=".7"/><path d="M6 2.500q4.500-3 8 .5l1.500 2.800-1.500 1-1.500-2.300-2 .2-1.800 2.300-2-1.600z" fill="#e9e9e9" stroke="#8a8a8a" stroke-width=".8"/></svg>
<svg style="left:1462.5px;top:814px" width="16" height="16" viewBox="0 0 16 16" ><path d="M9 7.200Q13.600 5.800 12.200 .8" fill="none" stroke="#d32f2f" stroke-width="1.050" stroke-linecap="round"/><path d="M9.500 8.200Q14 8 15.500 4.300" fill="none" stroke="#d32f2f" stroke-width="1.050" stroke-linecap="round"/><path d="M9.500 9.700Q14 9.500 15.500 12.800" fill="none" stroke="#d32f2f" stroke-width="1.050" stroke-linecap="round"/><path d="M9 10.800Q13 11.500 12 15.600" fill="none" stroke="#d32f2f" stroke-width="1.050" stroke-linecap="round"/><g transform="translate(16 0) scale(-1 1)"><path d="M9 7.200Q13.600 5.800 12.200 .8" fill="none" stroke="#d32f2f" stroke-width="1.050" stroke-linecap="round"/><path d="M9.500 8.200Q14 8 15.500 4.300" fill="none" stroke="#d32f2f" stroke-width="1.050" stroke-linecap="round"/><path d="M9.500 9.700Q14 9.500 15.500 12.800" fill="none" stroke="#d32f2f" stroke-width="1.050" stroke-linecap="round"/><path d="M9 10.800Q13 11.500 12 15.600" fill="none" stroke="#d32f2f" stroke-width="1.050" stroke-linecap="round"/></g><ellipse cx="8" cy="9.800" rx="2.300" ry="3.200" fill="#e25555" stroke="#d32f2f" stroke-width=".7"/><circle cx="8" cy="5.300" r="1.700" fill="#e25555" stroke="#d32f2f" stroke-width=".7"/></svg>
<svg style="left:1478px;top:380px" width="15" height="29" viewBox="0 0 15 29" ><path d="M-.5 .5a14.300 14.200 0 0 1 0 28.400z" fill="url(#gThumb)" stroke="#1f3a5a" stroke-width="1"/></svg>
<svg style="left:20px;top:20px" width="40" height="29" viewBox="0 0 40 29" ><circle cx="18.500" cy="14.700" r="9.600" fill="#1b62b5"/><circle cx="18.500" cy="14.700" r="9.600" fill="url(#gZap)"/><path d="M8.300 7.600l8.800-3.300 3.100 7.200-1.100.6 3.600 4.900-1.100.6 4.600 5-10.600-5.600 1-.7-3.600-3.300 1.100-.7z" fill="#fff" stroke="#111" stroke-width=".7" stroke-linejoin="round"/></svg>
<svg style="left:1420px;top:20px" width="80" height="29" viewBox="0 0 80 29" ><g fill="none" stroke="#7f8c8d" stroke-width="1.200"><path d="M9.500 11.700l5.500 5.500 5.500-5.500"/><path d="M33.500 16.500l5.500-5.500 5.500 5.500"/></g><circle cx="63" cy="14" r="9.200" fill="#7f8c8d"/><path d="M59 10l8 8M67 10l-8 8" stroke="#31363b" stroke-width="1.200"/></svg>
</div>
</body>
</html>
